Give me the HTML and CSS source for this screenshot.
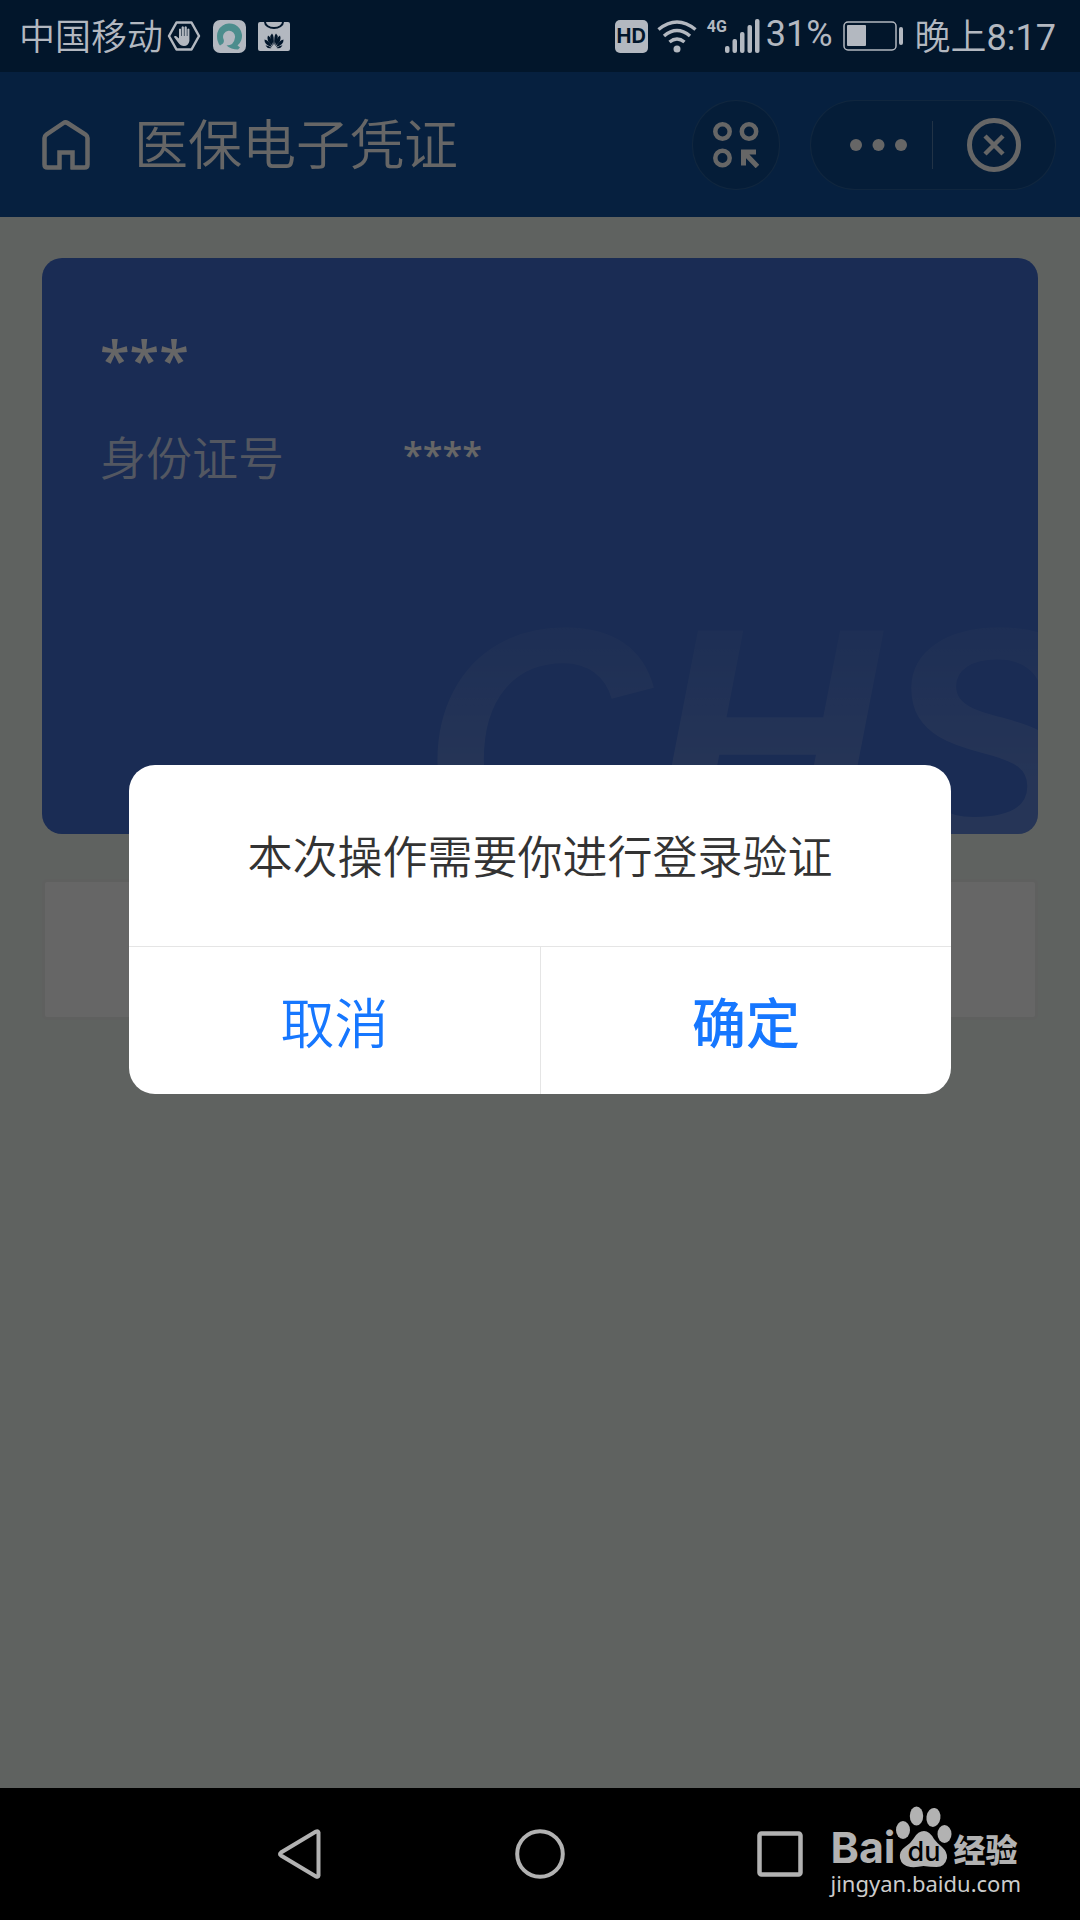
FILE: index.html
```html
<!DOCTYPE html>
<html lang="zh-CN">
<head>
  <meta charset="UTF-8">
  <meta name="viewport" content="width=device-width, initial-scale=1">
  <title>医保电子凭证</title>
  <link rel="stylesheet" href="styles.css">
</head>
<body>

  <div class="status-bar">
    <div class="status-left">
      <span>中国移动</span>
      <svg class="hand" width="34" height="30" viewBox="0 0 34 30">
        <path d="M9.500 1.500h15L32 15l-7.500 13.500h-15L2 15z" fill="none" stroke="#b3b8c0" stroke-width="2.500" stroke-linejoin="round"/>
        <path d="M12 8q1-1 2 0v7h.6V6q1.200-1.300 2.300 0v9h.6V6q1.200-1.300 2.300 0v9h.6V8q1-1 2 0v12q-1 5-5.400 5-3.500 0-5.500-3l-4.500-6q0-1.500 2-1l3 2.500z" fill="#b3b8c0"/>
      </svg>
      <svg width="33" height="33" viewBox="0 0 33 33">
        <rect width="33" height="33" rx="7" fill="#b3b8c0"/>
        <path d="M4 16a12.500 12.500 0 1 1 20.500 9.500l2.500 2-2 2q-7 0-11.500-4 7.500 0 8.500-8a6 6 0 1 0-11.500 1.500q1 2.500-.5 4.500l-3 2Q4 22 4 16z" fill="#4c8d8d"/>
      </svg>
      <svg width="32" height="29" viewBox="0 0 32 29">
        <rect width="32" height="29" rx="2" fill="#b3b8c0"/>
        <path d="M7 0a9 6 0 0 0 18 0" fill="none" stroke="#02162b" stroke-width="2"/>
        <g fill="#02162b">
          <path d="M15.500 23Q10 15 14 11.500q2.500 2 1.500 11.500z"/>
          <path d="M16.500 23q5.500-8 1.500-11.500-2.500 2-1.500 11.500z"/>
          <path d="M14.800 24Q7.500 19 10 13.500q4 2 4.800 10.500z"/>
          <path d="M17.200 24Q24.500 19 22 13.500q-4 2-4.800 10.500z"/>
          <path d="M14 25q-8-2-7.500-7.500Q11 18 14 25z"/>
          <path d="M18 25q8-2 7.500-7.500Q21 18 18 25z"/>
          <path d="M13.500 26q-4 1-6-2.500 3-.5 6 2.500z"/>
          <path d="M18.500 26q4 1 6-2.500-3-.5-6 2.500z"/>
        </g>
      </svg>
    </div>
    <div class="status-right">
      <span class="hd">HD</span>
      <svg class="wifi" width="40" height="33" viewBox="0 0 40 33">
        <g fill="none" stroke="#b3b8c0" stroke-width="3.500">
          <path d="M1.500 9.500q18.500-15 37 0"/>
          <path d="M7 16q13-11 26 0"/>
          <path d="M12.500 22q7.500-6 15 0"/>
        </g>
        <circle cx="20" cy="29" r="3.500" fill="#b3b8c0"/>
      </svg>
      <span class="net">4G</span>
      <svg width="35" height="34" viewBox="0 0 35 34" fill="#b3b8c0">
        <rect y="27" width="4.500" height="7" rx="2"/>
        <rect x="7.500" y="20" width="4.500" height="14" rx="2"/>
        <rect x="15" y="13" width="4.500" height="21" rx="2"/>
        <rect x="22.500" y="6" width="4.500" height="28" rx="2"/>
        <rect x="30" width="4.500" height="34" rx="2"/>
      </svg>
      <span class="percent">31%</span>
      <svg class="battery" width="61" height="30" viewBox="0 0 61 30">
        <rect x="1" y="1" width="52" height="28" rx="4" fill="none" stroke="#b3b8c0" stroke-width="1.500"/>
        <rect x="4" y="4" width="19" height="21" rx="1" fill="#b3b8c0"/>
        <rect x="56" y="6" width="4" height="18" rx="2" fill="#b3b8c0"/>
      </svg>
      <span>晚上<b class="time">8:17</b></span>
    </div>
  </div>

  <div class="app">
    <header class="header">
      <button class="icon-btn" aria-label="首页">
        <svg width="48" height="50" viewBox="0 0 48 50">
          <path d="M19.500 47.500H5.500q-3 0-3-3V18q0-2 2-3.500L21.500 3q2-1.300 4 0l18 11.500q2 1.500 2 3.500v26.500q0 3-3 3h-14M17.500 49V32.500h13V49" fill="none" stroke="#fff" stroke-width="4.500"/>
        </svg>
      </button>
      <h1 class="title">医保电子凭证</h1>
      <button class="round-btn" aria-label="小程序">
        <svg width="46" height="46" viewBox="0 0 46 46" fill="none" stroke="#fff">
          <circle cx="9.500" cy="9.500" r="7.200" stroke-width="4.500"/>
          <circle cx="36" cy="9.500" r="7.200" stroke-width="4.500"/>
          <circle cx="9.500" cy="36" r="7.200" stroke-width="4.500"/>
          <path d="M43 30H30.500v13.500M31 30.500l13.500 14" stroke-width="5"/>
        </svg>
      </button>
      <div class="capsule">
        <button class="capsule-btn" aria-label="更多">
          <svg width="58" height="12" viewBox="0 0 58 12" fill="#fff">
            <circle cx="6" cy="6" r="6"/>
            <circle cx="28.500" cy="6" r="6"/>
            <circle cx="51" cy="6" r="6"/>
          </svg>
        </button>
        <button class="capsule-btn" aria-label="关闭">
          <svg width="54" height="54" viewBox="0 0 54 54" fill="none" stroke="#fff">
            <circle cx="27" cy="27" r="24.500" stroke-width="5"/>
            <path d="M18 18l18 18M36 18L18 36" stroke-width="4.500"/>
          </svg>
        </button>
      </div>
    </header>

    <main class="content">
      <section class="card">
        <div class="name">***</div>
        <div class="field">
          <span class="label">身份证号</span>
          <span class="value">****</span>
        </div>
        <div class="chs" aria-hidden="true">CHS</div>
      </section>
      <div class="panel"></div>
    </main>

    <div class="mask">
      <div class="dialog" role="dialog" aria-modal="true" aria-labelledby="dialog-text">
        <p class="dialog-text" id="dialog-text">本次操作需要你进行登录验证</p>
        <div class="buttons">
          <button>取消</button>
          <button class="confirm">确定</button>
        </div>
      </div>
    </div>
  </div>

  <nav class="nav-bar">
    <button class="icon-btn" aria-label="返回">
      <svg width="50" height="50" viewBox="0 0 50 50">
        <path d="M43.500 3.500v43q-.5 2-2.500 1L6 26.500q-2-1.500 0-3l35-21q2-1 2.500 1z" fill="none" stroke="#b2b2b2" stroke-width="4"/>
      </svg>
    </button>
    <button class="icon-btn" aria-label="主页">
      <svg width="50" height="50" viewBox="0 0 50 50">
        <circle cx="25" cy="25" r="22.800" fill="none" stroke="#b2b2b2" stroke-width="4"/>
      </svg>
    </button>
    <button class="icon-btn" aria-label="最近任务">
      <svg width="50" height="50" viewBox="0 0 50 50">
        <rect x="4.500" y="4.500" width="41" height="41" rx="2" fill="none" stroke="#b2b2b2" stroke-width="4.500"/>
      </svg>
    </button>

    <div class="baidu">
      <div class="baidu-logo">
        <span class="bai">Bai</span>
        <svg width="58" height="62" viewBox="0 0 58 62">
          <g fill="#b2b2b2">
            <ellipse cx="7" cy="24" rx="7" ry="9"/>
            <ellipse cx="20.500" cy="10" rx="6.700" ry="9.500"/>
            <ellipse cx="37.500" cy="11.500" rx="7" ry="9.500" transform="rotate(8 38 11)"/>
            <ellipse cx="48.500" cy="28" rx="7" ry="9"/>
            <path d="M28 25q5.500 0 10 8 3 4 8 8 5.500 5 5 11-2 9-10.500 9-6 0-13-1-7 1.500-13 1-9-1-10.500-9-1-7 5-11 6-4 9-9 4-7 10-7z"/>
          </g>
          <text class="du" x="28" y="55" text-anchor="middle">du</text>
        </svg>
        <span class="jingyan">经验</span>
      </div>
      <div class="url">jingyan.baidu.com</div>
    </div>
  </nav>

</body>
</html>
```
FILE: styles.css
```css
* {
  box-sizing: border-box;
}
body {
  margin: 0;
  min-height: 100vh;
  display: flex;
  flex-direction: column;
  background-color: #000;
  font-family: Roboto, "Noto Sans CJK SC", sans-serif;
}
button {
  padding: 0;
  border: none;
  background: none;
  font-family: inherit;
  cursor: pointer;
}
svg {
  display: block;
  flex: none;
}

/* status bar */
.status-bar {
  display: flex;
  align-items: center;
  justify-content: space-between;
  height: 72px;
  padding: 0 24px 0 19px;
  background-color: #02162b;
  color: #b3b8c0;
  font-size: 36px;
  font-weight: 350;
  line-height: 72px;
  white-space: nowrap;
}
.status-bar span {
  padding-top: 3px;
}
.status-left,
.status-right {
  display: flex;
  align-items: center;
}
.status-left {
  gap: 12px;
}
.hand {
  margin-left: -8px;
}
.status-bar .hd {
  width: 33px;
  height: 33px;
  padding: 0;
  border-radius: 5px;
  background-color: #b3b8c0;
  color: #02162b;
  font-family: Inter, sans-serif;
  font-size: 20px;
  font-weight: 700;
  line-height: 33px;
  text-align: center;
}
.wifi {
  margin: 0 10px 0 9px;
}
.status-bar .net {
  width: 18px;
  height: 34px;
  padding: 0;
  font-size: 16px;
  font-weight: 700;
  line-height: 16px;
}
.status-bar .percent {
  margin: 0 10px 0 6px;
  padding: 0 0 4px;
  font-weight: 400;
}
.battery {
  margin-right: 11px;
}
.time {
  font-weight: 400;
}

/* app */
.app {
  position: relative;
  flex: 1;
  display: flex;
  flex-direction: column;
  background-color: #eef5f1;
}
.header {
  display: flex;
  align-items: center;
  height: 145px;
  padding: 0 24px 0 42px;
  background-color: #0f529d;
}
.title {
  flex: 1;
  margin: 0 0 0 44px;
  padding-top: 4px;
  color: #fff;
  font-size: 54px;
  font-weight: 350;
  line-height: 80px;
}
.round-btn {
  display: flex;
  align-items: center;
  justify-content: center;
  width: 88px;
  height: 90px;
  margin-right: 30px;
  border: 1px solid rgba(255, 255, 255, 0.12);
  border-radius: 45px;
  background-color: rgba(0, 0, 0, 0.1);
}
.capsule {
  display: flex;
  align-items: center;
  width: 246px;
  height: 90px;
  border: 1px solid rgba(255, 255, 255, 0.12);
  border-radius: 45px;
  background-color: rgba(0, 0, 0, 0.1);
}
.capsule-btn {
  display: flex;
  align-items: center;
  justify-content: center;
  width: 50%;
  height: 48px;
}
.capsule-btn:first-child {
  padding-left: 14px;
  border-right: 1px solid rgba(255, 255, 255, 0.3);
}
.content {
  padding: 41px 42px;
}
.card {
  position: relative;
  height: 576px;
  padding: 61px 58px;
  border-radius: 20px;
  background-color: #416ed2;
  color: #fff;
  overflow: hidden;
}
.name {
  font-family: "Open Sans", sans-serif;
  font-size: 54px;
  font-weight: 600;
  line-height: 80px;
}
.field {
  display: flex;
  align-items: flex-start;
  margin-top: 30px;
}
.label {
  width: 303px;
  color: rgba(255, 255, 255, 0.75);
  font-size: 46px;
  font-weight: 350;
  line-height: 60px;
}
.value {
  font-family: "Open Sans", sans-serif;
  font-size: 36px;
  font-weight: 600;
  line-height: 52px;
}
.chs {
  position: absolute;
  top: 291px;
  left: 380px;
  padding-right: 40px;
  background: linear-gradient(rgba(255, 255, 255, 0.05) 20%, rgba(255, 255, 255, 0.16) 60%);
  -webkit-background-clip: text;
  background-clip: text;
  color: transparent;
  font-family: "Liberation Sans", Arial, sans-serif;
  font-size: 316px;
  font-style: italic;
  font-weight: 700;
  line-height: 380px;
}
.panel {
  height: 141px;
  margin-top: 45px;
  border: 3px solid #eeefee;
  border-radius: 5px;
  background-color: #fff;
}

/* dialog */
.mask {
  position: absolute;
  inset: 0;
  display: flex;
  align-items: center;
  justify-content: center;
  padding: 0 129px 2px;
  background-color: rgba(0, 0, 0, 0.6);
}
.dialog {
  flex: 1;
  border-radius: 26px;
  background-color: #fff;
  overflow: hidden;
}
.dialog-text {
  margin: 0;
  padding: 63px 45px 57px;
  color: #333;
  font-size: 45px;
  font-weight: 350;
  line-height: 61px;
  text-align: center;
}
.buttons {
  display: grid;
  grid-template-columns: 1fr 1fr;
  border-top: 1px solid #e5e5e5;
}
.buttons button {
  height: 147px;
  color: #1677ff;
  font-size: 54px;
  font-weight: 350;
}
.buttons .confirm {
  border-left: 1px solid #e5e5e5;
  font-weight: 500;
}

/* navigation bar */
.nav-bar {
  position: relative;
  display: flex;
  align-items: center;
  justify-content: center;
  gap: 190px;
  height: 132px;
  background-color: #000;
}
.baidu {
  position: absolute;
  right: 59px;
  top: 16px;
  color: #b2b2b2;
}
.baidu-logo {
  display: flex;
  align-items: flex-end;
  height: 64px;
}
.bai {
  font-family: Inter, sans-serif;
  font-size: 43px;
  font-weight: 700;
  line-height: 42px;
}
.du {
  fill: #000;
  font-family: Inter, sans-serif;
  font-size: 27px;
  font-weight: 500;
}
.jingyan {
  font-size: 32px;
  font-weight: 900;
  line-height: 34px;
}
.url {
  color: #ccc;
  font-family: "Noto Sans", sans-serif;
  font-size: 22px;
  line-height: 30px;
}
```
